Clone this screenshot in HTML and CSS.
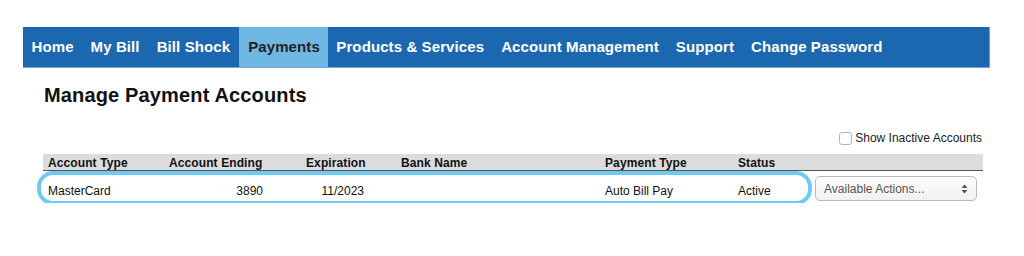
FILE: index.html
```html
<!DOCTYPE html>
<html lang="en">
<head>
<meta charset="utf-8">
<title>Manage Payment Accounts</title>
<link rel="stylesheet" href="styles.css">
</head>
<body>
<div class="page">
  <nav class="nav">
    <a class="nav-item">Home</a>
    <a class="nav-item">My Bill</a>
    <a class="nav-item">Bill Shock</a>
    <a class="nav-item active">Payments</a>
    <a class="nav-item">Products &amp; Services</a>
    <a class="nav-item">Account Management</a>
    <a class="nav-item">Support</a>
    <a class="nav-item">Change Password</a>
  </nav>
  <h1 class="title">Manage Payment Accounts</h1>
  <div class="content">
    <label class="inactive">
      <span class="checkbox"></span>
      <span>Show Inactive Accounts</span>
    </label>
    <div class="table-wrap">
      <table class="accounts">
        <colgroup>
          <col class="c1"><col class="c2"><col class="c3"><col class="c4"><col class="c5"><col class="c6"><col class="c7">
        </colgroup>
        <thead>
          <tr>
            <th>Account Type</th>
            <th>Account Ending</th>
            <th>Expiration</th>
            <th>Bank Name</th>
            <th>Payment Type</th>
            <th>Status</th>
            <th></th>
          </tr>
        </thead>
        <tbody>
          <tr>
            <td>MasterCard</td>
            <td class="num ending">3890</td>
            <td class="num exp">11/2023</td>
            <td></td>
            <td>Auto Bill Pay</td>
            <td>Active</td>
            <td class="action-cell">
              <div class="select">
                <span>Available Actions...</span>
                <svg class="arrows" width="7" height="10" viewBox="0 0 7 10"><path d="M3.5 0.5 L6.5 4 L0.5 4 Z" fill="#555"/><path d="M3.5 9.5 L6.5 6 L0.5 6 Z" fill="#555"/></svg>
              </div>
            </td>
          </tr>
        </tbody>
      </table>
      <div class="highlight"></div>
    </div>
  </div>
</div>
</body>
</html>
```
FILE: styles.css
```css
* { box-sizing: border-box; }
html, body { margin: 0; padding: 0; background: #fff; }
body { font-family: "Liberation Sans", Arial, sans-serif; color: #111; }

.page { padding: 27px 0 0 23px; width: 990px; }

.nav {
  display: flex;
  height: 41px;
  width: 967px;
  background: #1b68b0;
  border-right: 1px solid #6a9bd0;
  border-bottom: 1px solid #7aa6d6;
}
.nav-item {
  display: block;
  padding: 0 8.5px;
  line-height: 40px;
  font-size: 15px;
  font-weight: bold;
  letter-spacing: 0.1px;
  color: #fff;
  white-space: nowrap;
}
.nav-item.active {
  background: #70b8e4;
  color: #222;
  padding: 0 8px 0 9.5px;
}

.title {
  margin: 15px 0 0 21px;
  font-size: 20px;
  line-height: 24px;
  font-weight: bold;
  letter-spacing: 0.15px;
  color: #111;
}

.content { margin-left: 20px; width: 940px; }

.inactive {
  display: flex;
  justify-content: flex-end;
  align-items: center;
  gap: 3px;
  margin-top: 23px;
  height: 16px;
  padding-right: 1px;
  font-size: 12px;
  color: #222;
}
.checkbox {
  width: 13px;
  height: 13px;
  border: 1px solid #b4b4b4;
  border-radius: 3px;
  background: #fff;
}

.table-wrap { position: relative; margin-top: 8px; }

.accounts {
  width: 940px;
  table-layout: fixed;
  border-collapse: collapse;
  font-size: 12px;
}
.c1 { width: 121px; }
.c2 { width: 137px; }
.c3 { width: 95px; }
.c4 { width: 204px; }
.c5 { width: 133px; }
.c6 { width: 77px; }
.c7 { width: 173px; }

.accounts th {
  background: #dcdcdc;
  text-align: left;
  font-weight: bold;
  letter-spacing: 0.1px;
  line-height: 13px;
  padding: 3px 5px 0;
  height: 16px;
  border-bottom: 1px solid #555;
  white-space: nowrap;
}
.accounts td {
  vertical-align: top;
  line-height: 14px;
  padding: 13px 5px 5px;
  height: 32px;
  white-space: nowrap;
}
.accounts td.num { text-align: right; }
.accounts td.ending { padding-right: 38px; }
.accounts td.exp { padding-right: 32px; }
.accounts td.action-cell { padding: 5px 6px 0 5px; }

.select {
  display: flex;
  align-items: center;
  justify-content: space-between;
  height: 25px;
  width: 162px;
  padding: 0 8px 0 8px;
  border: 1px solid #b8b8b8;
  border-radius: 5px;
  background: linear-gradient(#fdfdfd, #f1f1f1);
  color: #555;
  font-size: 12px;
}
.arrows { display: block; }

.highlight {
  position: absolute;
  left: -6px;
  top: 17px;
  width: 775px;
  height: 34px;
  border: 4px solid #6ccaf4;
  border-radius: 16px;
  pointer-events: none;
}
```
